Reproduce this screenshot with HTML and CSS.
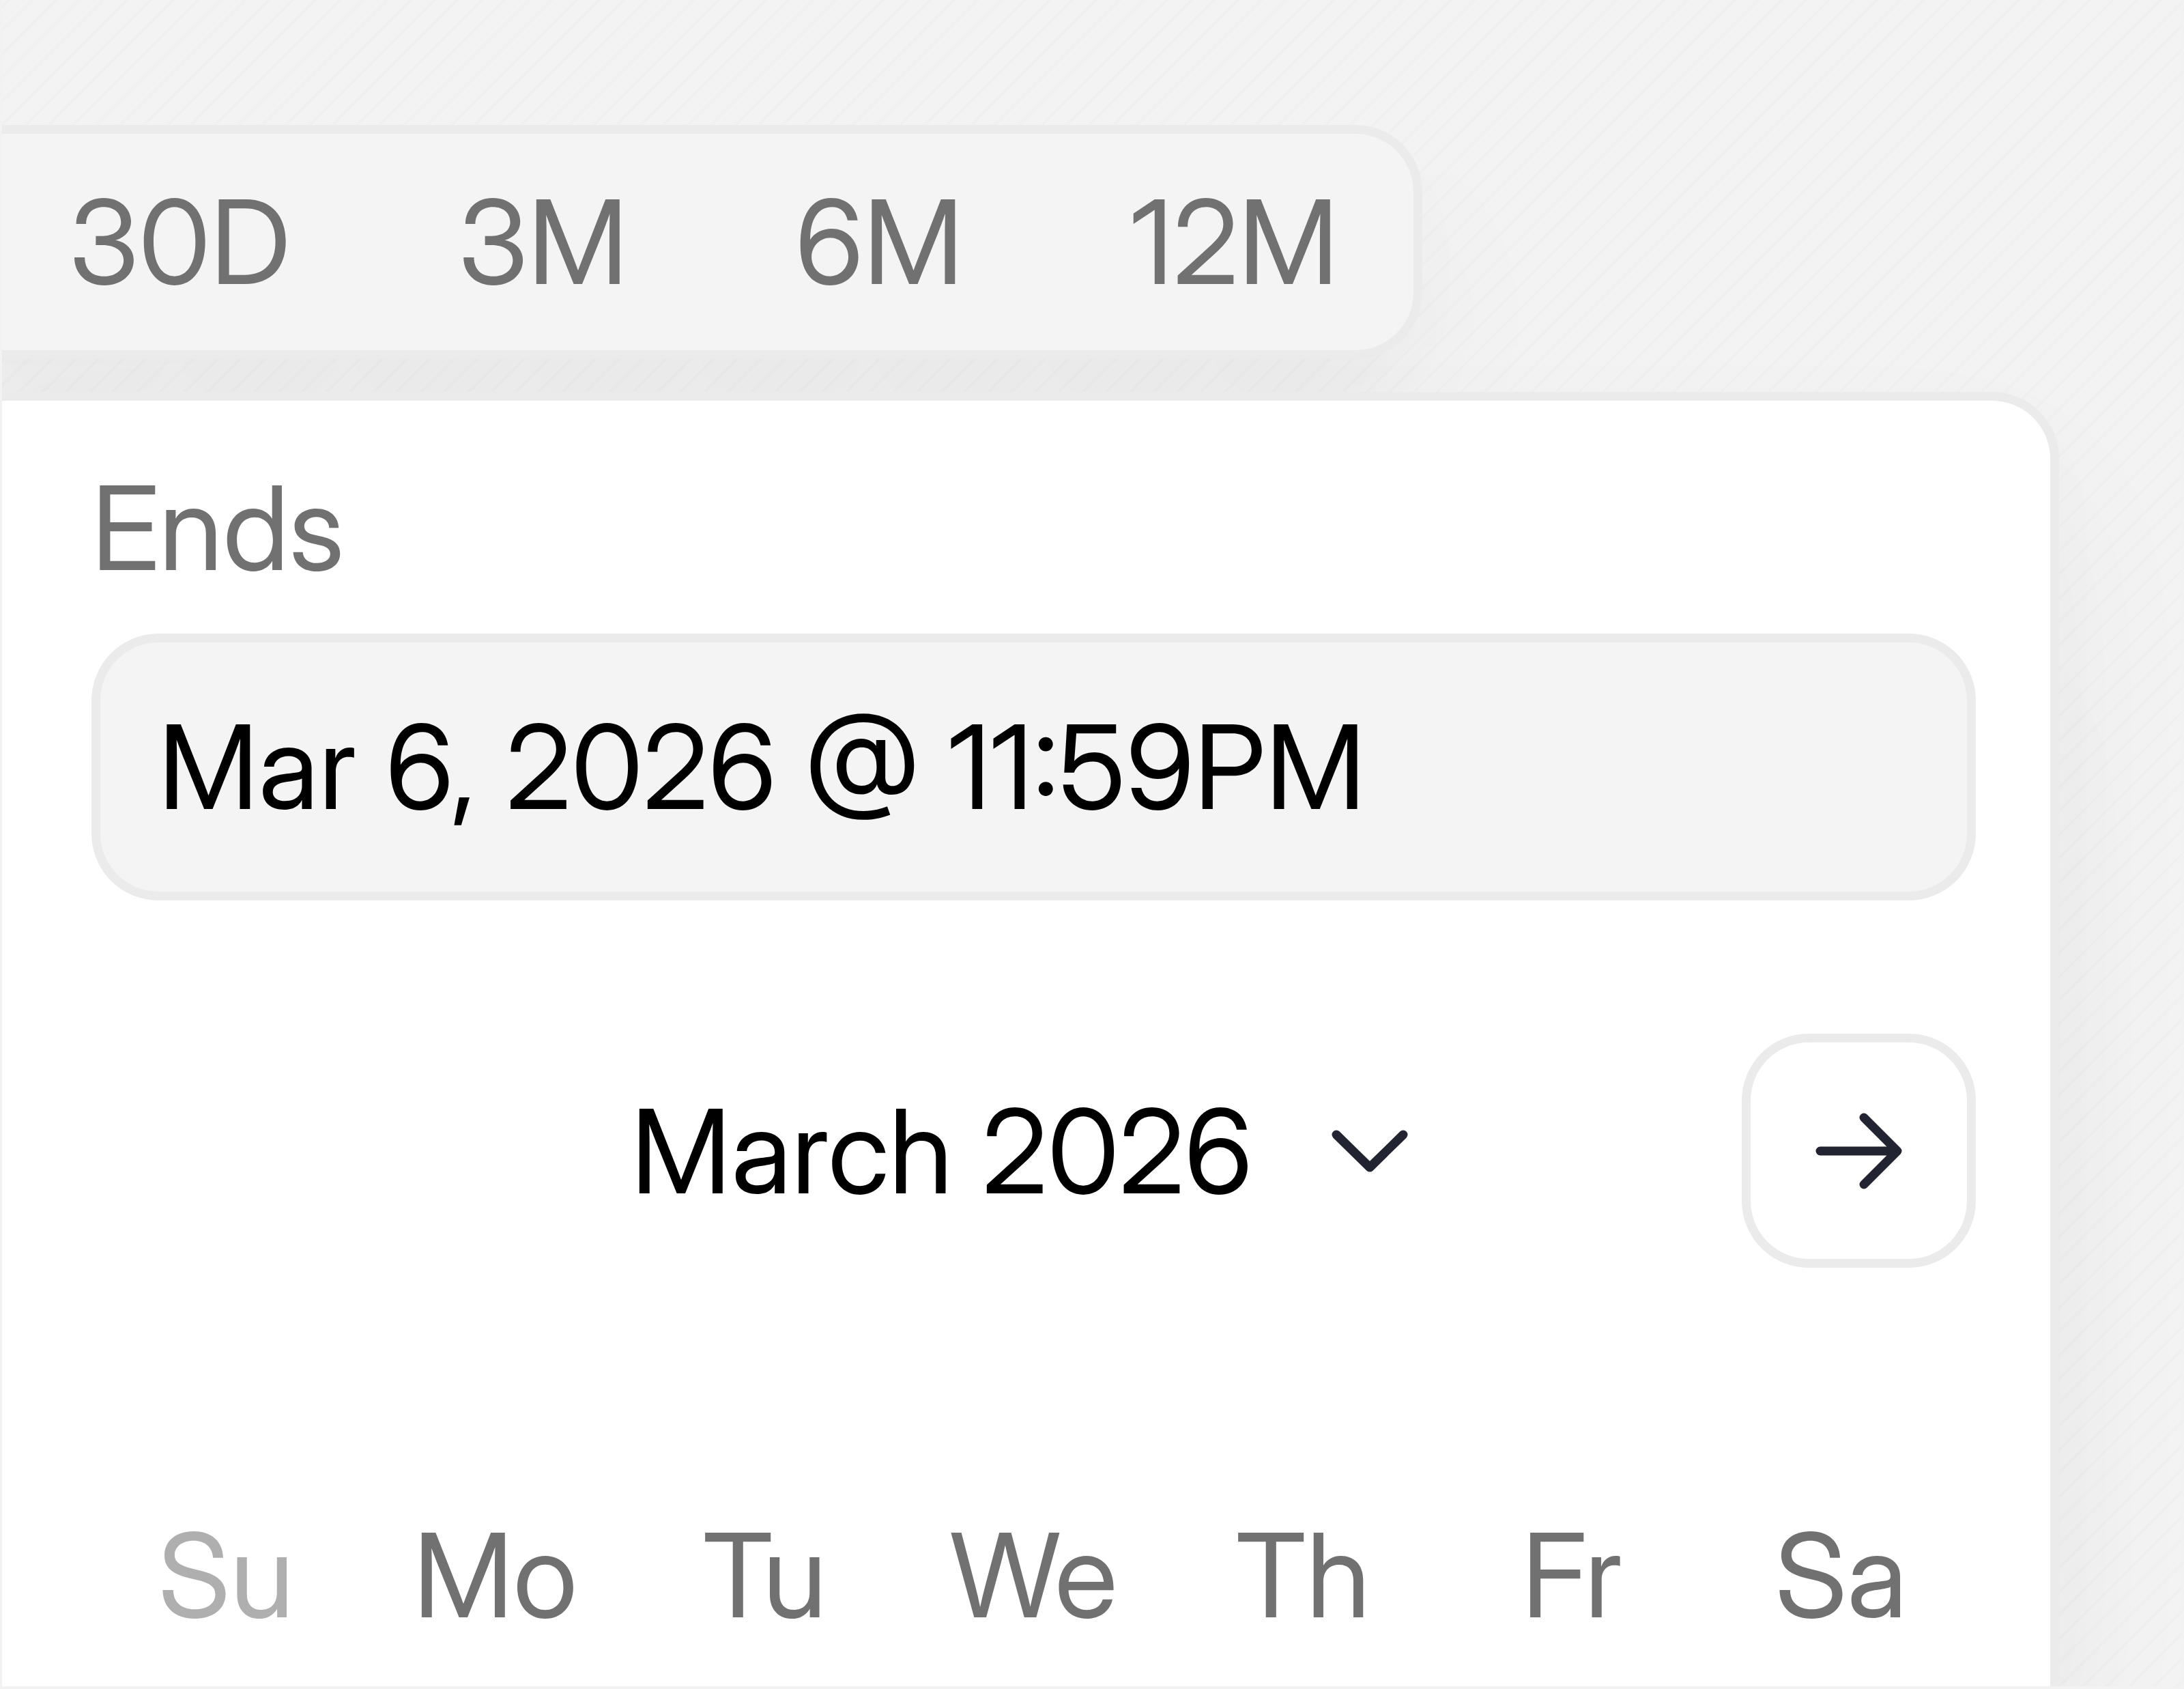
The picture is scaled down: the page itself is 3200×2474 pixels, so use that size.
FILE: index.html
```html
<!DOCTYPE html>
<html lang="en">
<head>
<meta charset="utf-8">
<title>Date range</title>
<link rel="stylesheet" href="styles.css">
</head>
<body>
<main class="stage">
  <nav class="ranges" aria-label="Preset ranges">
    <button class="range" type="button">30D</button>
    <button class="range" type="button">3M</button>
    <button class="range" type="button">6M</button>
    <button class="range" type="button">12M</button>
  </nav>
  <section class="panel">
    <div class="field">
      <label class="field-label" for="ends">Ends</label>
      <input class="field-input" id="ends" type="text" value="Mar 6, 2026 @ 11:59PM">
    </div>
    <div class="calendar-head">
      <button class="month" type="button">
        <span>March 2026</span>
        <svg class="icon" viewBox="0 0 196 196" aria-hidden="true"><path d="M50 74 99 122 148 74"/></svg>
      </button>
      <button class="next" type="button" aria-label="Next month">
        <svg class="icon" viewBox="0 0 196 196" aria-hidden="true"><path d="M41 98H154M105 49 154 98 105 147"/></svg>
      </button>
    </div>
    <table class="weekdays">
      <thead>
        <tr>
          <th class="muted" scope="col">Su</th>
          <th scope="col">Mo</th>
          <th scope="col">Tu</th>
          <th scope="col">We</th>
          <th scope="col">Th</th>
          <th scope="col">Fr</th>
          <th scope="col">Sa</th>
        </tr>
      </thead>
    </table>
  </section>
</main>
</body>
</html>
```
FILE: styles.css
```css
:root {
  --line: #ebebeb;
  --fill: #f4f4f4;
  --grey: #717171;
  --icon: #222531;
  --shadow: 0 49px 122px rgba(0, 0, 0, 0.014), 0 122px 343px rgba(0, 0, 0, 0.04);
}

* {
  box-sizing: border-box;
}

body {
  margin: 0;
  font: 400 171px/245px "Inter Display", "Inter Variable", Inter, sans-serif;
  font-optical-sizing: auto;
  font-variation-settings: "opsz" 32;
  color: #000;
}

button,
input {
  margin: 0;
  padding: 0;
  border: 0;
  background: none;
  font: inherit;
  font-variation-settings: inherit;
  color: inherit;
}

.stage {
  display: flex;
  flex-direction: column;
  align-items: flex-start;
  gap: 48px;
  min-height: 100vh;
  padding-top: 183px;
  border: solid #f2f2f2;
  border-width: 0 3px 4px;
  overflow: hidden;
  background: repeating-linear-gradient(135deg, #f3f3f3 0 5px, #f0f0f0 5px 9px, #f3f3f3 9px 29px, #f0f0f0 29px 33px, #f3f3f3 33px 49px);
}

/* The bar runs on past the left edge of the stage */
.ranges {
  display: flex;
  gap: 49px;
  margin-left: -294px;
  padding: 35px 12px 37px 294px;
  border: 13px solid var(--line);
  border-left: 0;
  border-radius: 98px;
  background: var(--fill);
  box-shadow: var(--shadow);
  color: var(--grey);
}

.range {
  padding: 0 98px;
}

.panel {
  position: relative;
  flex: 1;
  align-self: stretch;
  margin-right: 180px;
  padding: 63px 109px 0 131px;
  border: solid var(--line);
  border-width: 13px 13px 0 0;
  border-radius: 0 98px 0 0;
  background: #fff;
  box-shadow: var(--shadow), 0 392px 294px rgba(0, 0, 0, 0.014);
}

.field {
  display: flex;
  flex-direction: column;
  gap: 33px;
}

.field-label {
  color: var(--grey);
}

.field-input {
  width: 100%;
  height: 391px;
  padding: 0 85px 2px;
  border: 13px solid var(--line);
  border-radius: 98px;
  background: var(--fill);
}

.calendar-head {
  display: grid;
  grid-template-columns: 1fr auto 1fr;
  align-items: center;
  margin-top: 195px;
}

.month {
  grid-column: 2;
  display: flex;
  align-items: center;
  gap: 73px;
}

.icon {
  display: block;
  width: 196px;
  height: 196px;
  fill: none;
  stroke: var(--icon);
  stroke-width: 13px;
  stroke-linecap: round;
  stroke-linejoin: round;
}

.next {
  justify-self: end;
  display: grid;
  place-items: center;
  width: 343px;
  height: 343px;
  border: 13px solid var(--line);
  border-radius: 98px;
}

.weekdays {
  width: 100%;
  margin-top: 327px;
  table-layout: fixed;
  border-collapse: collapse;
  color: var(--grey);
}

.weekdays th {
  padding: 0;
  font-weight: 400;
  text-align: center;
}

.weekdays .muted {
  color: #afafaf;
}
```
